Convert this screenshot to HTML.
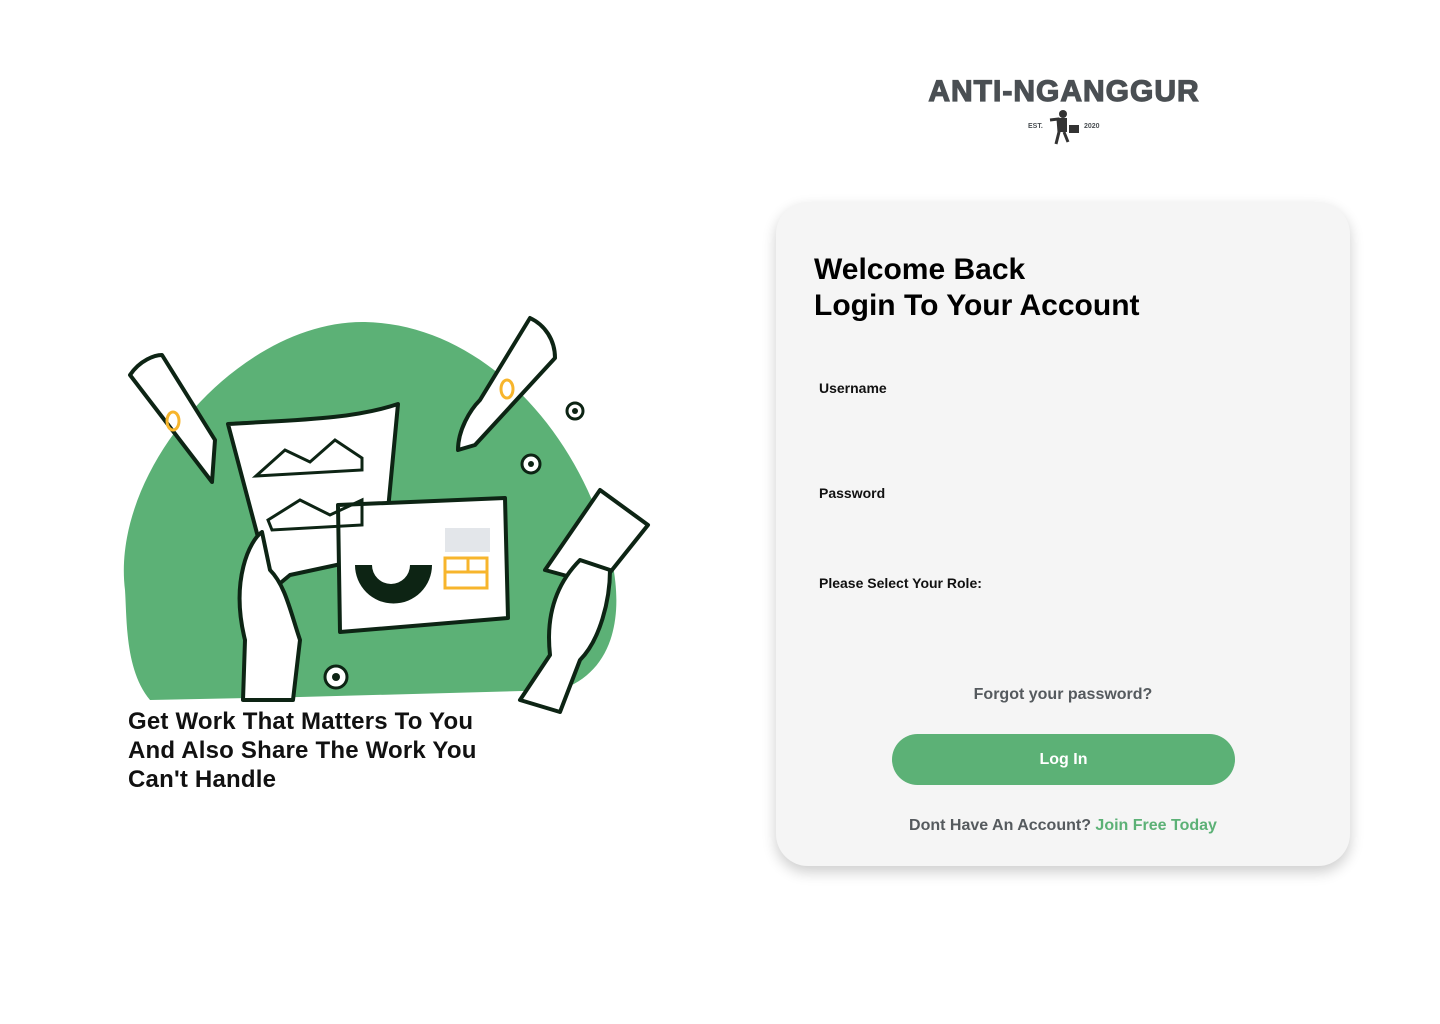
<!DOCTYPE html>
<html><head><meta charset="utf-8">
<style>
*{margin:0;padding:0;box-sizing:border-box}
body{width:1440px;height:1024px;background:#fff;font-family:"Liberation Sans",sans-serif;position:relative;overflow:hidden}
.logo{position:absolute;left:908px;top:74px;width:312px;text-align:center}
.logo .t{font-size:30px;font-weight:900;color:#4a4f53;letter-spacing:1px;line-height:36px;-webkit-text-stroke:1.2px #4a4f53;white-space:nowrap}
.card{position:absolute;left:776px;top:202px;width:574px;height:664px;background:#f5f5f5;border-radius:32px;box-shadow:0 6px 14px rgba(0,0,0,.2)}
h1{position:absolute;left:814px;top:252px;font-size:30px;font-weight:bold;line-height:36px;color:#000;white-space:nowrap}
.lbl{position:absolute;left:819px;font-size:14px;font-weight:bold;color:#111}
.fp{position:absolute;left:776px;width:574px;top:686px;text-align:center;font-size:16px;color:#555a5e;font-weight:bold}
.btn{position:absolute;left:892px;top:734px;width:343px;height:51px;border-radius:26px;background:#5cb176;color:#fff;font-size:16px;font-weight:bold;text-align:center;line-height:51px}
.reg{position:absolute;left:776px;width:574px;top:817px;text-align:center;font-size:16px;color:#555a5e;font-weight:bold;white-space:nowrap}
.reg span{color:#5cb176}
.tag{position:absolute;left:128px;top:707px;font-size:24px;line-height:29px;color:#111;font-weight:bold;letter-spacing:.2px;white-space:nowrap}
</style></head><body>
<div class="logo"><div class="t">ANTI-NGANGGUR</div>
<svg width="312" height="40" viewBox="0 0 312 40" style="margin-top:-4px">
<text x="120" y="22" font-size="7" font-weight="bold" fill="#4a4f53" font-family="Liberation Sans">EST.</text>
<text x="176" y="22" font-size="7" font-weight="bold" fill="#4a4f53" font-family="Liberation Sans">2020</text>
<circle cx="155" cy="8" r="4" fill="#333"/>
<path d="M142 14 L150 13 L151 26 L148 38 M156 26 L160 36" stroke="#333" stroke-width="3" fill="none"/>
<rect x="150" y="12" width="9" height="14" fill="#333"/><rect x="161" y="19" width="10" height="8" fill="#333"/>
</svg></div>

<svg style="position:absolute;left:0;top:0" width="700" height="800" viewBox="0 0 700 800">
<path d="M125 590 C110 470 240 320 365 322 C470 324 560 410 600 520 C630 600 620 670 560 690 L300 697 L150 700 C125 670 127 620 125 590Z" fill="#5cb176"/>
<g stroke="#0d2414" stroke-width="4" fill="#fff" stroke-linejoin="round">
<path d="M130 375 C140 360 155 355 162 355 L215 440 L212 482 Z"/>
<path d="M530 318 C545 325 555 340 555 358 L475 445 L458 450 C458 430 470 410 480 400 Z"/>
<path d="M228 424 C290 420 350 420 398 404 L388 510 L383 555 L290 575 L272 590 Z"/>
<path d="M338 505 L505 498 L508 618 L340 632 Z"/>
<path d="M545 570 L600 490 L648 525 L600 585 Z"/>
<path d="M262 532 C250 540 230 580 245 640 L243 700 L293 700 L300 640 C290 610 285 585 270 570 Z"/>
<path d="M580 560 C560 580 545 610 550 655 L520 700 L560 712 L580 660 C600 640 610 600 610 570 Z"/>
</g>
<path d="M256 476 L285 450 L310 462 L335 440 L362 458 L362 470 Z M268 520 L300 500 L330 515 L362 500 L362 525 L272 530 Z" stroke="#0d2414" stroke-width="3" fill="none"/>
<path d="M355 565 A38 38 0 1 0 432 565 L410 565 A18 18 0 1 1 372 565Z" fill="#0d2414"/>
<rect x="445" y="558" width="42" height="30" stroke="#f7b52c" stroke-width="3" fill="none"/>
<path d="M445 572 H487 M468 558 V572" stroke="#f7b52c" stroke-width="3"/>
<rect x="445" y="528" width="45" height="24" fill="#e3e6ea"/>
<ellipse cx="173" cy="421" rx="6" ry="9" stroke="#f7b52c" stroke-width="3" fill="none"/>
<ellipse cx="507" cy="389" rx="6" ry="9" stroke="#f7b52c" stroke-width="3" fill="none"/>
<g stroke="#0d2414" stroke-width="3" fill="#fff"><circle cx="575" cy="411" r="8"/><circle cx="531" cy="464" r="9"/><circle cx="336" cy="677" r="11"/></g>
<g fill="#0d2414"><circle cx="575" cy="411" r="3"/><circle cx="531" cy="464" r="3"/><circle cx="336" cy="677" r="4"/></g>
</svg>

<div class="tag">Get Work That Matters To You<br>And Also Share The Work You<br>Can't Handle</div>

<div class="card"></div>
<h1>Welcome Back<br>Login To Your Account</h1>
<div class="lbl" style="top:380px">Username</div>
<div class="lbl" style="top:485px">Password</div>
<div class="lbl" style="top:575px">Please Select Your Role:</div>
<div class="fp">Forgot your password?</div>
<div class="btn">Log In</div>
<div class="reg">Dont Have An Account? <span>Join Free Today</span></div>
</body></html>
